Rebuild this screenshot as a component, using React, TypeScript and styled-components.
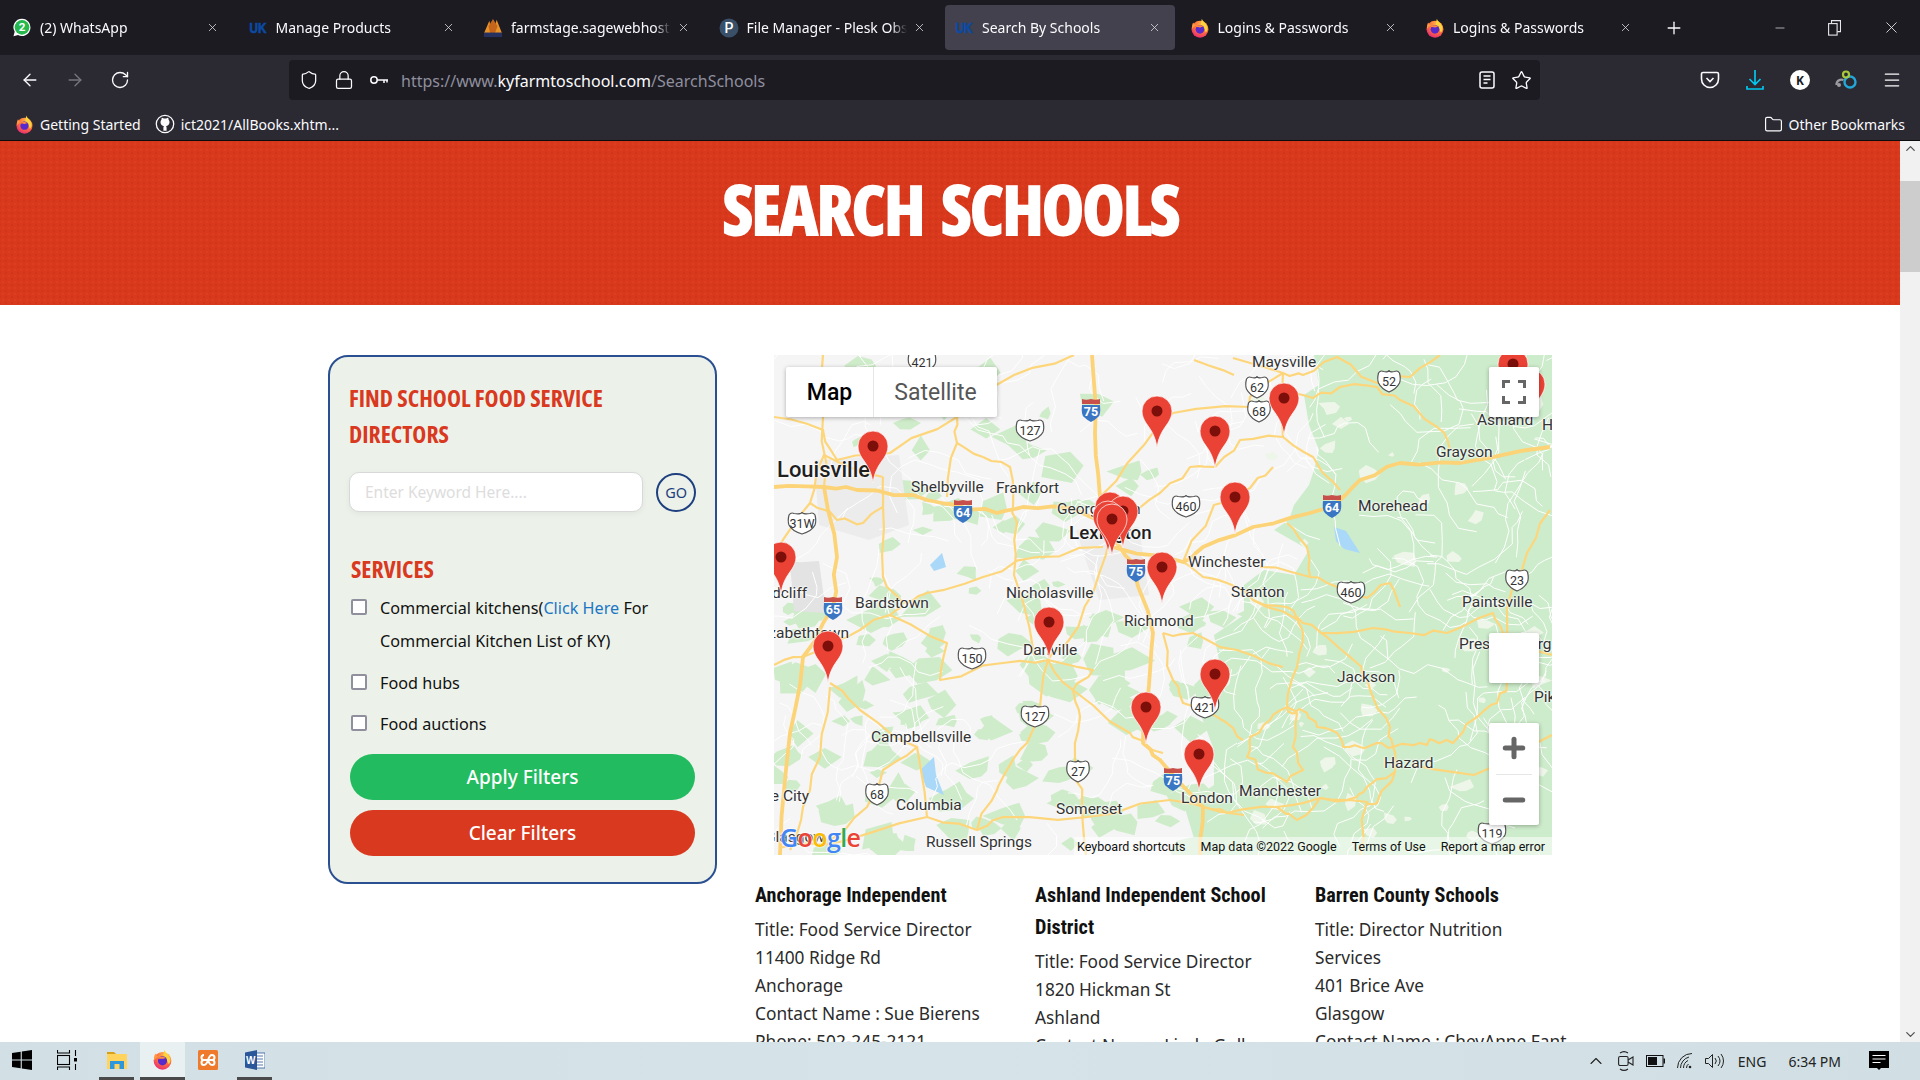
import React from "react";
import styled, { createGlobalStyle } from "styled-components";
import {
  ArrowLeft,
  ArrowRight,
  RotateCw,
  Shield,
  Lock,
  Star,
  Menu,
  X,
  Plus,
  Minus,
  Folder,
  ChevronUp,
  ChevronDown,
} from "lucide-react";

const GlobalStyle = createGlobalStyle`
  html, body {
    margin: 0;
    padding: 0;
    width: 1920px;
    height: 1080px;
    overflow: hidden;
    background: #fff;
    font-family: "Noto Sans", "Open Sans", sans-serif;
  }
`;

const Screen = styled.div`
  width: 1920px;
  height: 1080px;
  display: flex;
  flex-direction: column;
  overflow: hidden;
`;

/* ---------- browser chrome ---------- */

const TabStrip = styled.div`
  height: 55px;
  background: #1c1b22;
  display: flex;
  align-items: center;
  padding-left: 3px;
  gap: 5.5px;
  color: #fbfbfe;
`;

const Tab = styled.div<{ $active?: boolean }>`
  width: 230px;
  height: 45px;
  flex: none;
  display: flex;
  align-items: center;
  padding: 0 14px 0 9px;
  box-sizing: border-box;
  border-radius: 4px;
  background: ${({ $active }) => ($active ? "#42414d" : "transparent")};
`;

const TabIcon = styled.span`
  width: 20px;
  height: 20px;
  flex: none;
  display: flex;
  align-items: center;
  justify-content: center;
`;

const TabTitle = styled.span`
  flex: 1;
  margin-left: 8px;
  font-size: 14px;
  white-space: nowrap;
  overflow: hidden;
  -webkit-mask-image: linear-gradient(to right, #000 90%, transparent);
  mask-image: linear-gradient(to right, #000 90%, transparent);
`;

const TabClose = styled(X)`
  flex: none;
  width: 13px;
  height: 13px;
  margin-left: 6px;
  color: #d8d8dc;
`;

const NewTab = styled(Plus)`
  flex: none;
  margin-left: 12px;
  width: 20px;
  height: 20px;
  stroke-width: 1.6;
`;

const WindowButtons = styled.div`
  margin-left: auto;
  display: flex;
  align-items: center;
  gap: 41px;
  padding-right: 19px;
  color: #e8e8ea;
`;

const NavBar = styled.div`
  height: 55px;
  box-sizing: border-box;
  padding-bottom: 5px;
  background: #2b2a33;
  display: flex;
  align-items: center;
  color: #fbfbfe;
`;

const NavButtons = styled.div`
  width: 289px;
  flex: none;
  display: flex;
  align-items: center;
  gap: 25px;
  padding-left: 20px;
  box-sizing: border-box;
`;

const UrlBar = styled.div`
  width: 1251px;
  height: 40px;
  flex: none;
  background: #1c1b22;
  border-radius: 4px;
  display: flex;
  align-items: center;
  padding: 0 8px 0 10px;
  box-sizing: border-box;
`;

const UrlIcons = styled.div`
  display: flex;
  align-items: center;
  gap: 15px;
  margin-right: 12px;
`;

const UrlText = styled.span`
  padding-top: 2px;
  font-family: "Noto Sans", sans-serif;
  font-size: 16px;
  color: #8f8f9d;
  white-space: nowrap;
`;

const UrlHost = styled.span`
  color: #fbfbfe;
`;

const UrlRight = styled.div`
  margin-left: auto;
  display: flex;
  align-items: center;
  gap: 16px;
`;

const NavRight = styled.div`
  flex: 1;
  display: flex;
  align-items: center;
  gap: 25px;
  padding-left: 160px;
`;

const AccountBadge = styled.span`
  width: 20px;
  height: 20px;
  border-radius: 50%;
  background: #fff;
  color: #1c1b22;
  font-size: 12px;
  font-weight: 700;
  display: flex;
  align-items: center;
  justify-content: center;
`;

const BookmarkBar = styled.div`
  height: 31px;
  box-sizing: border-box;
  padding: 0 15px 2px 15px;
  background: #2b2a33;
  border-bottom: 1px solid #0c0c0d;
  display: flex;
  align-items: center;
  color: #fbfbfe;
  font-size: 14px;
`;

const Bookmark = styled.span`
  display: flex;
  align-items: center;
  gap: 6px;
  white-space: nowrap;
  margin-right: 14px;
`;

const OtherBookmarks = styled(Bookmark)`
  margin-left: auto;
  margin-right: 0;
`;

/* ---------- page ---------- */

const Viewport = styled.div`
  flex: 1;
  min-height: 0;
  display: flex;
  overflow: hidden;
`;

const Page = styled.div`
  flex: 1;
  min-width: 0;
  overflow: hidden;
  background: #fff;
`;

const ScrollTrack = styled.div`
  width: 20px;
  flex: none;
  background: #f1f1f1;
  display: flex;
  flex-direction: column;
  align-items: center;
  color: #505050;
`;

const ScrollThumb = styled.div`
  width: 100%;
  height: 91px;
  margin-top: 25px;
  background: #cdcdcd;
`;

const ScrollSpacer = styled.div`
  flex: 1;
`;

const Hero = styled.header`
  height: 164px;
  background-color: #d8381c;
  background-image: radial-gradient(rgba(255, 100, 50, 0.14) 1px, transparent 1.5px),
    radial-gradient(rgba(120, 20, 0, 0.08) 1px, transparent 1.5px);
  background-size: 6px 6px, 6px 6px;
  background-position: 0 0, 3px 3px;
  display: flex;
  justify-content: center;
  padding-top: 30px;
  box-sizing: border-box;
`;

const HeroTitle = styled.h1`
  margin: 0;
  color: #fff;
  font-family: "Open Sans", sans-serif;
  font-stretch: 75%;
  font-weight: 800;
  font-size: 70px;
  line-height: 76px;
  letter-spacing: -3px;
  word-spacing: 8px;
  text-transform: uppercase;
`;

const Main = styled.main`
  display: flex;
  align-items: flex-start;
  padding: 50px 0 0 328px;
`;

const FilterPanel = styled.aside`
  width: 389px;
  height: 529px;
  flex: none;
  box-sizing: border-box;
  background: #ecf2e9;
  border: 2px solid #2a5091;
  border-radius: 20px;
  padding: 24px 19px 0 19px;
`;

const PanelHeading = styled.h2`
  margin: 0;
  color: #d9391f;
  font-family: "Open Sans", sans-serif;
  font-stretch: 75%;
  font-size: 23.7px;
  font-weight: 700;
  line-height: 35.5px;
`;

const SearchRow = styled.div`
  display: flex;
  align-items: center;
  margin-top: 20px;
  gap: 13px;
`;

const SearchInput = styled.input`
  width: 296px;
  height: 40px;
  box-sizing: border-box;
  padding: 0 15px;
  border: 1px solid #d8d8d8;
  border-radius: 10px;
  background: #fff;
  box-shadow: 0 2px 6px rgba(0, 0, 0, 0.05);
  font-family: "Noto Sans", sans-serif;
  font-size: 15.5px;
  outline: none;
  &::placeholder {
    color: #dddddd;
    opacity: 1;
  }
`;

const GoButton = styled.button`
  width: 40px;
  height: 39px;
  padding: 0;
  border: 2px solid #1e3f80;
  border-radius: 50%;
  background: transparent;
  color: #1e3f80;
  font-family: "Noto Sans", sans-serif;
  font-size: 14.5px;
`;

const ServicesHeading = styled(PanelHeading)`
  margin: 40px 0 0 2px;
`;

const ServiceList = styled.div`
  margin-top: 4px;
  display: flex;
  flex-direction: column;
`;

const ServiceRow = styled.label<{ $gap: number }>`
  display: flex;
  align-items: flex-start;
  margin-bottom: ${({ $gap }) => $gap}px;
  margin-left: 2px;
  font-size: 16.2px;
  line-height: 33px;
  color: #111;
`;

const CheckBox = styled.span`
  width: 16px;
  height: 16px;
  flex: none;
  box-sizing: border-box;
  margin: 7px 13px 0 0;
  border: 2px solid #8f8f9d;
  border-radius: 2px;
  background: #fff;
`;

const ServiceLink = styled.a`
  color: #1b76c4;
`;

const PillButton = styled.button<{ $color: string }>`
  display: block;
  width: 345px;
  height: 46px;
  margin: 0 0 10px 1px;
  border: none;
  border-radius: 23px;
  background: ${({ $color }) => $color};
  color: #fff;
  font-family: "Noto Sans", sans-serif;
  font-size: 19px;
  font-weight: 500;
`;

const Results = styled.section`
  flex: none;
  margin-left: 38px;
`;

const MapFrame = styled.div`
  position: relative;
  width: 778px;
  height: 500px;
  margin-left: 19px;
  overflow: hidden;
  background: #f5f5f5;
  font-family: Roboto, sans-serif;
`;

const MapArt = styled.svg`
  position: absolute;
  inset: 0;
`;

const MapLabel = styled.span<{ $x: number; $y: number; $size?: number }>`
  position: absolute;
  left: ${({ $x }) => $x}px;
  top: ${({ $y }) => $y}px;
  transform: translateY(-50%);
  color: ${({ $size }) => ($size ? "#1f1f1f" : "#333")};
  font-size: ${({ $size }) => $size ?? 15.5}px;
  font-weight: ${({ $size }) => ($size ? 500 : 400)};
  white-space: nowrap;
  text-shadow: 0 0 2px #fff, 0 0 2px #fff, 0 0 3px #fff;
`;

const PinMark = styled.svg<{ $x: number; $y: number }>`
  position: absolute;
  left: ${({ $x }) => $x - 16}px;
  top: ${({ $y }) => $y - 52}px;
`;

const MapTypeControl = styled.div`
  position: absolute;
  left: 12px;
  top: 12px;
  height: 50px;
  display: flex;
  background: #fff;
  border-radius: 2px;
  box-shadow: 0 1px 4px rgba(0, 0, 0, 0.3);
  font-size: 23px;
`;

const MapTypeButton = styled.div<{ $active?: boolean; $width: number }>`
  width: ${({ $width }) => $width}px;
  display: flex;
  align-items: center;
  justify-content: center;
  color: ${({ $active }) => ($active ? "#000" : "#565656")};
  font-weight: ${({ $active }) => ($active ? 500 : 400)};
  & + & {
    border-left: 1px solid #e6e6e6;
  }
`;

const MapSquare = styled.div<{ $top: number }>`
  position: absolute;
  left: 715px;
  top: ${({ $top }) => $top}px;
  width: 50px;
  height: 50px;
  background: #fff;
  border-radius: 2px;
  box-shadow: 0 1px 4px rgba(0, 0, 0, 0.3);
  display: flex;
  align-items: center;
  justify-content: center;
  color: #666;
`;

const ZoomControl = styled.div`
  position: absolute;
  left: 715px;
  top: 368px;
  width: 50px;
  height: 102px;
  background: #fff;
  border-radius: 2px;
  box-shadow: 0 1px 4px rgba(0, 0, 0, 0.3);
  display: flex;
  flex-direction: column;
  align-items: center;
  color: #666;
`;

const ZoomHalf = styled.div`
  flex: 1;
  display: flex;
  align-items: center;
  justify-content: center;
`;

const ZoomRule = styled.div`
  width: 36px;
  height: 1px;
  background: #e6e6e6;
`;

const GoogleMark = styled.div`
  position: absolute;
  left: 6px;
  bottom: 3px;
  font-family: "Open Sans", sans-serif;
  font-size: 25px;
  font-weight: 600;
  letter-spacing: -0.6px;
  line-height: 30px;
  text-shadow: 0 0 2px #fff, 0 0 2px #fff;
`;

const GoogleLetter = styled.span<{ $color: string }>`
  color: ${({ $color }) => $color};
`;

const Attribution = styled.div`
  position: absolute;
  right: 0;
  bottom: 0;
  height: 18px;
  display: flex;
  align-items: center;
  padding: 0 7px 0 3px;
  gap: 15px;
  background: rgba(255, 255, 255, 0.55);
  font-size: 12.5px;
  color: #111;
  white-space: nowrap;
`;

const SchoolGrid = styled.div`
  display: grid;
  grid-template-columns: repeat(3, 280px);
  margin-top: 24px;
`;

const SchoolCard = styled.article`
  padding-right: 23px;
`;

const SchoolName = styled.h3`
  margin: 0 0 5px;
  font-family: Roboto, sans-serif;
  font-stretch: 75%;
  font-size: 20.2px;
  font-weight: 700;
  line-height: 32px;
  color: #111;
`;

const SchoolLine = styled.div`
  font-family: "Noto Sans", sans-serif;
  font-size: 17.3px;
  line-height: 28px;
  color: #2b2b2b;
`;

/* ---------- taskbar ---------- */

const TaskBar = styled.footer`
  height: 38px;
  flex: none;
  background: linear-gradient(90deg, #d2e0e6, #d6e3e8 50%, #d1dfe5);
  display: flex;
  align-items: stretch;
  color: #111;
`;

const TaskSlot = styled.div<{ $width: number; $open?: boolean; $active?: boolean }>`
  width: ${({ $width }) => $width}px;
  flex: none;
  display: flex;
  align-items: center;
  justify-content: center;
  box-sizing: border-box;
  background: ${({ $active }) => ($active ? "#e9f0f2" : "transparent")};
  border-bottom: 3px solid ${({ $open }) => ($open ? "#4a4a4a" : "transparent")};
`;

const Tray = styled.div`
  margin-left: auto;
  display: flex;
  align-items: center;
  padding-right: 31px;
  gap: 12px;
  font-family: "Noto Sans", sans-serif;
  font-size: 14px;
  color: #222;
`;

const TrayClock = styled.span`
  margin: 0 16px 0 10px;
`;

/* ---------- small drawings ---------- */

const Firefox = ({ size = 20 }: { size?: number }) => (
  <svg width={size} height={size} viewBox="0 0 32 32">
    <defs>
      <radialGradient id="ffBody" cx="0.65" cy="0.2" r="0.95">
        <stop offset="0" stopColor="#ffbd4f" />
        <stop offset="0.5" stopColor="#ff7139" />
        <stop offset="1" stopColor="#e31587" />
      </radialGradient>
    </defs>
    <circle cx="16" cy="18" r="13.5" fill="url(#ffBody)" />
    <path d="M19 1c1 5 8 7 9 15 .4 3-1 6-3 7-1-6-5-9-8-11 1-4 1-8 2-11z" fill="#ffd43b" />
    <path d="M5 7c-2 4-2 8-2 11 2-3 4-5 7-6-2-1-4-3-5-5z" fill="#ff9640" />
    <circle cx="16" cy="18" r="7" fill="#592acb" />
    <path d="M9 14c3-3 9-3 12 0-2 0-3 1-5 1s-5 0-7-1z" fill="#ff8a3d" />
  </svg>
);

const WhatsAppIcon = () => (
  <svg width="21" height="21" viewBox="0 0 24 24">
    <path d="M12 1.5a10.3 10.3 0 0 0-8.8 15.6L1.8 22.4l5.4-1.4A10.3 10.3 0 1 0 12 1.5z" fill="#fff" />
    <circle cx="12" cy="11.8" r="8.8" fill="#25b84c" />
    <text x="12" y="16.6" textAnchor="middle" fontSize="14" fontWeight="700" fill="#fff" fontFamily="Roboto">
      2
    </text>
  </svg>
);

const KentuckyIcon = () => (
  <svg width="20" height="20" viewBox="0 0 20 20">
    <text x="10" y="15" textAnchor="middle" fontSize="15" fontWeight="900" fill="#0b4aa2" fontFamily="Liberation Sans" stroke="#0b4aa2" strokeWidth="0.7" textLength="17" lengthAdjust="spacingAndGlyphs">
      UK
    </text>
  </svg>
);

const PeaksIcon = () => (
  <svg width="22" height="22" viewBox="0 0 22 22">
    <path d="M1 17 7 3l3 14zM11 17 15 2l6 15z" fill="#e8922a" />
    <path d="M6 9 11 1l5 8-3 8H8z" fill="#c4651b" />
    <rect x="1" y="16" width="20" height="5" fill="#27315f" />
  </svg>
);

const PleskIcon = () => (
  <svg width="20" height="20" viewBox="0 0 20 20">
    <circle cx="10" cy="10" r="9.5" fill="#3a4f68" />
    <text x="10" y="15" textAnchor="middle" fontSize="14" fill="#fff" fontFamily="Roboto" fontWeight="500">
      P
    </text>
  </svg>
);

const KeyIcon = () => (
  <svg width="20" height="16" viewBox="0 0 20 16" fill="none" stroke="#fbfbfe" strokeWidth="1.5">
    <circle cx="5" cy="8" r="3.2" />
    <path d="M8.2 8H19M15 8v3M18 8v2.5" />
  </svg>
);

const ReaderIcon = () => (
  <svg width="16" height="18" viewBox="0 0 16 18" fill="none" stroke="#fbfbfe" strokeWidth="1.5">
    <rect x="1" y="1" width="14" height="16" rx="2" />
    <path d="M4.5 5h7M4.5 8.5h7M4.5 12h4" />
  </svg>
);

const PocketIcon = () => (
  <svg width="20" height="20" viewBox="0 0 20 20" fill="none" stroke="#fbfbfe" strokeWidth="1.6">
    <path d="M3 2.5h14a1.5 1.5 0 0 1 1.5 1.5v5a8.5 8.5 0 0 1-17 0V4A1.5 1.5 0 0 1 3 2.5z" />
    <path d="M6.5 8 10 11.5 13.5 8" />
  </svg>
);

const DownloadIcon = () => (
  <svg width="20" height="22" viewBox="0 0 20 22" fill="none" stroke="#00c8f0" strokeWidth="1.7">
    <path d="M10 1v14M4.5 10l5.5 5.5 5.5-5.5M2 17v3h16v-3" />
  </svg>
);

const ExtensionIcon = () => (
  <svg width="22" height="20" viewBox="0 0 22 20" fill="none">
    <circle cx="15" cy="12" r="5.5" stroke="#22a7d8" strokeWidth="2.4" />
    <circle cx="11" cy="4.5" r="3" stroke="#a8c83a" strokeWidth="2.2" />
    <path d="M1.5 15a5 5 0 0 1 7-5" stroke="#9a9aa0" strokeWidth="2.2" />
    <circle cx="4" cy="15" r="2" fill="#9a9aa0" />
  </svg>
);

const RestoreIcon = () => (
  <svg width="13" height="16" viewBox="0 0 13 16" fill="none" stroke="#e8e8ea" strokeWidth="1.1">
    <rect x="0.6" y="3.6" width="8.5" height="11.5" />
    <path d="M3.5 3.5V0.6h9v11h-3.2" />
  </svg>
);

const GithubIcon = () => (
  <svg width="20" height="20" viewBox="0 0 20 20">
    <circle cx="10" cy="10" r="8.7" fill="#2b2a33" stroke="#fbfbfe" strokeWidth="1.3" />
    <path d="M5.5 8c0-1 .4-1.800 1-2.500 0-.6 0-1.300.3-1.800.8 0 1.400.3 2 .8a7 7 0 0 1 2.400 0c.6-.5 1.200-.8 2-.8.3.5.3 1.200.3 1.800.6.700 1 1.500 1 2.500 0 3-2 3.800-3.500 4 .4.4.6 1 .6 1.700v3h-3.200v-3c0-.7.2-1.300.6-1.700C7.500 11.800 5.500 11 5.500 8z" fill="#fbfbfe" />
  </svg>
);

const WindowsLogo = () => (
  <svg width="20" height="20" viewBox="0 0 20 20" fill="#000">
    <path d="M0 3 8.700 1.800v7.800H0zM9.800 1.600 20 0v9.600H9.800zM0 10.600h8.700v7.700L0 17zM9.800 10.600H20V20L9.800 18.500z" />
  </svg>
);

const TaskViewIcon = () => (
  <svg width="20" height="20" viewBox="0 0 20 20" fill="none" stroke="#000" strokeWidth="1.1">
    <path d="M0.5 0v3h12V0M0.5 20v-3h12v3" />
    <rect x="0.5" y="5.5" width="12" height="9" />
    <path d="M18.5 0v6M18.5 14v6" />
    <rect x="17" y="8" width="3" height="3.5" fill="#000" stroke="none" />
  </svg>
);

const ExplorerIcon = () => (
  <svg width="20" height="20" viewBox="0 0 20 20">
    <path d="M0 2h7l2 2h-9z" fill="#d8a015" />
    <rect x="0" y="4" width="20" height="15" fill="#ffd35c" />
    <rect x="3" y="11" width="14" height="8" fill="#2e97dc" />
    <rect x="7.5" y="14" width="5" height="5" fill="#ffd35c" />
  </svg>
);

const XamppIcon = () => (
  <svg width="20" height="20" viewBox="0 0 20 20">
    <rect width="20" height="20" rx="1.5" fill="#f07a2c" />
    <path d="M6 5a2.500 2.500 0 0 0 0 5h8a2.500 2.500 0 0 0 0-5c-2 0-3 2-4 5-1 3-2 5-4 5a2.500 2.500 0 0 1 0-5M14 10a2.500 2.500 0 0 1 0 5c-2 0-3-2-4-5" fill="none" stroke="#fff" strokeWidth="2" />
  </svg>
);

const WordIcon = () => (
  <svg width="20" height="20" viewBox="0 0 20 20">
    <rect x="9" y="3" width="11" height="15" fill="#fff" stroke="#2b579a" strokeWidth="0.8" />
    <path d="M11.5 6H18M11.5 9H18M11.5 12H18M11.5 15H18" stroke="#2b579a" strokeWidth="0.8" />
    <path d="M0 2.500 12 0v20L0 17.500z" fill="#2b579a" />
    <text x="5.8" y="13.5" textAnchor="middle" fontSize="10" fontWeight="700" fill="#fff" fontFamily="Liberation Sans">
      W
    </text>
  </svg>
);

const MeetIcon = () => (
  <svg width="16" height="20" viewBox="0 0 16 20" fill="none" stroke="#222" strokeWidth="1.1">
    <path d="M2 2a7 7 0 0 1 8 0M2 18a7 7 0 0 0 8 0" />
    <rect x="0.6" y="5.5" width="9.5" height="9" rx="1.5" />
    <path d="M10 9l5-3v8l-5-3" />
  </svg>
);

const BatteryIcon = () => (
  <svg width="19" height="12" viewBox="0 0 19 12">
    <rect x="0.5" y="0.5" width="16.5" height="11" fill="none" stroke="#111" />
    <rect x="2" y="2" width="9" height="8" fill="#111" />
    <rect x="17.5" y="3.5" width="1.5" height="5" fill="#111" />
  </svg>
);

const WifiIcon = () => (
  <svg width="16" height="16" viewBox="0 0 16 16" fill="none" stroke="#222" strokeWidth="1">
    <path d="M0.5 15A14.500 14.500 0 0 1 15 0.5M3.500 15A11.500 11.500 0 0 1 12 4M6.500 15A8.500 8.500 0 0 1 11 7.500M9.500 15a5 5 0 0 1 2-4" />
    <circle cx="13" cy="14" r="1.3" fill="#222" stroke="none" />
  </svg>
);

const VolumeIcon = () => (
  <svg width="21" height="16" viewBox="0 0 21 16" fill="none" stroke="#222" strokeWidth="1">
    <path d="M0.5 5.500h3l4-4v13l-4-4h-3zM10 5a4.500 4.500 0 0 1 0 6M13 3a8 8 0 0 1 0 10M16 1a11 11 0 0 1 0 14" />
  </svg>
);

const NoticeIcon = () => (
  <svg width="20" height="20" viewBox="0 0 20 20">
    <path d="M0 0h20v17h-8l-2 2-2-2H0z" fill="#000" />
    <path d="M3.5 4.500h13M3.500 8h13M3.500 11.500h8" stroke="#fff" strokeWidth="1" />
  </svg>
);

/* ---------- map data ---------- */

const seeded = (seed: number) => () => {
  seed = (seed + 0x6d2b79f5) | 0;
  let t = Math.imul(seed ^ (seed >>> 15), 1 | seed);
  t = (t + Math.imul(t ^ (t >>> 7), 61 | t)) ^ t;
  return ((t ^ (t >>> 14)) >>> 0) / 4294967296;
};

const blob = (r: () => number, cx: number, cy: number, size: number) => {
  const sides = 4 + Math.floor(r() * 4);
  const pts: string[] = [];
  for (let i = 0; i < sides; i++) {
    const a = (i / sides) * Math.PI * 2;
    const d = size * (0.4 + r() * 0.8);
    pts.push(`${(cx + Math.cos(a) * d).toFixed(1)},${(cy + Math.sin(a) * d * 0.7).toFixed(1)}`);
  }
  return pts.join(" ");
};

const wiggle = (line: string, seed: number, amount: number) => {
  const r = seeded(seed);
  const pts = line.split(" ").map((p) => p.split(",").map(Number));
  const out: string[] = [];
  pts.forEach(([x, y], i) => {
    if (i > 0) {
      const [px, py] = pts[i - 1];
      for (let k = 1; k < 3; k++) {
        const f = k / 3;
        out.push(`${(px + (x - px) * f + (r() - 0.5) * amount).toFixed(1)},${(py + (y - py) * f + (r() - 0.5) * amount).toFixed(1)}`);
      }
    }
    out.push(`${x},${y}`);
  });
  return out.join(" ");
};

const eastLand =
  "540,0 545,30 530,40 535,70 545,95 540,115 535,130 520,150 515,165 500,175 535,195 520,220 490,215 470,230 470,260 440,280 445,305 420,330 425,355 440,395 440,430 410,450 425,500 778,500 778,0";

const buildPatches = () => {
  const r = seeded(42);
  const out: string[] = [];
  for (let i = 0; i < 300; i++) {
    const x = r() * 540;
    const y = 10 + r() * 490;
    const town =
      (x > 30 && x < 135 && y > 95 && y < 180) ||
      (x > 295 && x < 375 && y > 165 && y < 245) ||
      (x > 390 && y < 250) ||
      (y < 130 && r() < 0.4);
    if (town) continue;
    out.push(blob(r, x, y, 8 + r() * 17));
  }
  return out;
};

const buildEastSpots = () => {
  const r = seeded(7);
  const out: string[] = [];
  for (let i = 0; i < 44; i++) {
    out.push(blob(r, 480 + r() * 290, 20 + r() * 470, 4 + r() * 9));
  }
  return out;
};

const buildLanes = () => {
  const r = seeded(11);
  const out: string[] = [];
  for (let i = 0; i < 260; i++) {
    let x = r() < 0.6 ? 430 + r() * 348 : r() * 430;
    let y = r() * 500;
    let a = r() * Math.PI * 2;
    const pts = [`${x.toFixed(1)},${y.toFixed(1)}`];
    const steps = 5 + Math.floor(r() * 6);
    for (let s = 0; s < steps; s++) {
      a += (r() - 0.5) * 1.8;
      const d = 7 + r() * 12;
      x += Math.cos(a) * d;
      y += Math.sin(a) * d;
      pts.push(`${x.toFixed(1)},${y.toFixed(1)}`);
    }
    out.push(pts.join(" "));
  }
  return out;
};

const greenPatches = buildPatches();
const eastSpots = buildEastSpots();
const lanes = buildLanes();

const highways = [
  "0,132 50,132 83,135 139,140 183,150 223,158 249,152 296,153 323,165 339,192 409,207 429,192 479,172 536,158 566,145 586,125 626,108 686,108 776,92",
  "318,0 321,78 326,142 336,182 359,208 379,278 375,330 369,388 386,405 429,452 426,500",
  "50,132 63,202 59,252 29,302 16,378 6,500",
];

const roads = [
  "0,310 29,302 73,282 116,260 173,288 166,325 229,308 274,305",
  "56,328 86,355 143,392 109,415 93,452 56,485",
  "56,332 46,402 29,452 16,495",
  "143,392 153,462",
  "6,493 70,486 153,462 203,475 229,462 313,462 396,445 470,460",
  "274,305 266,352 253,388 233,415 223,435 203,475",
  "274,305 299,335 356,378 371,388 389,398",
  "299,335 306,362 301,405 308,452 312,500",
  "274,305 319,315 299,335",
  "329,192 263,202 209,222 153,238 129,248 116,260",
  "183,62 183,88 173,142",
  "109,122 109,152 89,168 63,165 36,148 50,100 109,122",
  "49,0 49,62 50,132",
  "63,105 116,98 183,62 240,20 300,0",
  "0,62 49,75 63,105",
  "209,102 236,112 239,152 243,168 240,220 260,300",
  "183,88 209,102",
  "336,182 319,238 295,285 274,305",
  "459,3 509,18 529,20 563,2 603,28 636,22 666,0",
  "509,18 476,42 476,52 399,58 370,90 326,142",
  "509,38 539,43 566,32 603,32 626,45 663,72 676,95",
  "509,18 509,82 466,85 441,112 416,112 386,138 350,160",
  "509,82 539,102 549,118 566,135",
  "499,112 476,133 440,150 409,207",
  "486,212 536,222 553,228 593,243 616,228 626,252",
  "536,222 533,192 513,168",
  "409,207 429,222 453,228 479,245 519,262 529,278 523,312 513,352 496,365 476,382 473,402 493,418 513,427 529,415 519,392 523,358 513,352",
  "513,352 533,358 543,372 563,378 569,392 586,392 603,388 619,392 646,388 659,385 679,388 703,362 723,348 733,328 733,252 753,198 776,155",
  "621,417 619,392 616,372 599,342 589,322 583,308 553,282 529,268 513,252 479,245",
  "546,278 599,273 636,278 673,278 719,258 729,278 778,300",
  "621,417 593,432 583,442 546,443 503,452 453,458 429,452",
  "546,443 593,447 603,448 621,417",
  "593,447 586,500",
  "503,452 523,465 546,443",
  "389,278 419,278 463,295 509,312",
  "389,278 399,325 409,348 453,368 469,385",
  "0,200 36,148",
  "129,248 109,222 109,152",
  "460,20 420,5",
  "778,380 700,420 640,410",
];

const usShields: [number, number, string][] = [
  [148, 7, "421"], [256, 75, "127"], [28, 168, "31W"], [412, 151, "460"], [483, 32, "62"], [485, 56, "68"],
  [615, 26, "52"], [577, 237, "460"], [743, 225, "23"], [198, 303, "150"], [261, 361, "127"], [304, 416, "27"],
  [103, 439, "68"], [431, 352, "421"], [718, 478, "119"],
];

const interstates: [number, number, string][] = [
  [317, 55, "75"], [189, 156, "64"], [362, 215, "75"], [59, 253, "65"], [558, 151, "64"], [399, 424, "75"],
];

const UsShield = ({ x, y, text }: { x: number; y: number; text: string }) => {
  const w = text.length > 2 ? 13 : 10.5;
  return (
    <g transform={`translate(${x} ${y})`}>
      <path
        d={`M${-w} -8 q2 -3 5 -1.5 q${w - 5} 1 ${w - 5} -1.5 q0 2.5 ${w - 5} 1.5 q3 -1.5 5 1.5 q1.5 6 0 10 q-3 6 -${w} 9 q-${w - 3} -3 -${w} -9 q-1.5 -4 0 -10z`}
        fill="#fff"
        stroke="#555"
        strokeWidth="1.2"
      />
      <text y="4.5" textAnchor="middle" fontSize="12.5" fill="#333" fontFamily="Roboto">
        {text}
      </text>
    </g>
  );
};

const InterstateShield = ({ x, y, text }: { x: number; y: number; text: string }) => (
  <g transform={`translate(${x} ${y})`}>
    <path d="M-9 -6q0-4 0-5q4 1.5 9 0q5 1.5 9 0q0 1 0 5z" fill="#c8504a" />
    <path d="M-9 -5h18q1 10-2 12q-3 3-7 5q-4-2-7-5q-3-2-2-12z" fill="#3a76c4" />
    <text y="6" textAnchor="middle" fontSize="12.5" fontWeight="700" fill="#fff" fontFamily="Roboto">
      {text}
    </text>
  </g>
);

const mapLabels: { x: number; y: number; t: string; size?: number }[] = [
  { x: 3, y: 114, t: "Louisville", size: 22 },
  { x: 137, y: 132, t: "Shelbyville" },
  { x: 222, y: 133, t: "Frankfort" },
  { x: 283, y: 154, t: "Georgetown" },
  { x: 295, y: 178, t: "Lexington", size: 18.8 },
  { x: 232, y: 238, t: "Nicholasville" },
  { x: 81, y: 248, t: "Bardstown" },
  { x: -20, y: 238, t: "Radcliff" },
  { x: -22, y: 278, t: "Elizabethtown" },
  { x: 350, y: 266, t: "Richmond" },
  { x: 249, y: 295, t: "Danville" },
  { x: 97, y: 382, t: "Campbellsville" },
  { x: -29, y: 441, t: "Cave City" },
  { x: 122, y: 450, t: "Columbia" },
  { x: 152, y: 487, t: "Russell Springs" },
  { x: 282, y: 454, t: "Somerset" },
  { x: 407, y: 443, t: "London" },
  { x: 465, y: 436, t: "Manchester" },
  { x: 610, y: 408, t: "Hazard" },
  { x: 563, y: 322, t: "Jackson" },
  { x: 685, y: 289, t: "Prestonsburg" },
  { x: 760, y: 342, t: "Pikeville" },
  { x: 688, y: 247, t: "Paintsville" },
  { x: 457, y: 237, t: "Stanton" },
  { x: 414, y: 207, t: "Winchester" },
  { x: 584, y: 151, t: "Morehead" },
  { x: 662, y: 97, t: "Grayson" },
  { x: 478, y: 7, t: "Maysville" },
  { x: 703, y: 65, t: "Ashland" },
  { x: 768, y: 70, t: "Huntington" },
  { x: -9, y: 482, t: "Glasgow" },
];

const pins: [number, number][] = [
  [99, 127], [383, 92], [510, 79], [441, 112], [461, 178], [388, 248], [739, 45], [756, 65],
  [7, 238], [54, 327], [275, 303], [372, 388], [441, 355], [425, 435],
  [336, 188], [349, 192], [334, 197], [338, 200],
];

const Pin = ({ x, y }: { x: number; y: number }) => (
  <PinMark $x={x} $y={y} width="32" height="54" viewBox="0 0 32 54">
    <path
      d="M16 53c-1.5-12-6-18-11-25C2.5 24 1 20.5 1 16a15 15 0 0 1 30 0c0 4.5-1.5 8-4 12-5 7-9.5 13-11 25z"
      fill="#ea4335"
      stroke="#fff"
      strokeOpacity="0.7"
      strokeWidth="1"
    />
    <circle cx="16" cy="16" r="5.5" fill="#7d0f0a" />
  </PinMark>
);

const schools = [
  {
    name: "Anchorage Independent",
    lines: ["Title: Food Service Director", "11400 Ridge Rd", "Anchorage", "Contact Name : Sue Bierens", "Phone: 502-245-2121"],
  },
  {
    name: "Ashland Independent School District",
    lines: ["Title: Food Service Director", "1820 Hickman St", "Ashland", "Contact Name : Linda Gull"],
  },
  {
    name: "Barren County Schools",
    lines: ["Title: Director Nutrition Services", "401 Brice Ave", "Glasgow", "Contact Name : ChevAnne Fant"],
  },
];

const tabs = [
  { icon: <WhatsAppIcon />, title: "(2) WhatsApp" },
  { icon: <KentuckyIcon />, title: "Manage Products" },
  { icon: <PeaksIcon />, title: "farmstage.sagewebhosting.com" },
  { icon: <PleskIcon />, title: "File Manager - Plesk Obsidian" },
  { icon: <KentuckyIcon />, title: "Search By Schools", active: true },
  { icon: <Firefox />, title: "Logins & Passwords" },
  { icon: <Firefox />, title: "Logins & Passwords" },
];

const MapPanel = () => (
  <MapFrame>
    <MapArt width="778" height="500" viewBox="0 0 778 500">
      <rect width="778" height="500" fill="#f5f5f5" />
      <polygon points={eastLand} fill="#cdeccb" />
      {greenPatches.map((p, i) => (
        <polygon key={i} points={p} fill="#cfecca" />
      ))}
      {eastSpots.map((p, i) => (
        <polygon key={i} points={p} fill="#eef6ea" />
      ))}
      <polygon points="40,105 125,100 135,170 95,185 45,170" fill="#ececec" />
      <polygon points="16,208 45,206 52,258 20,256" fill="#e3e3e3" />
      <polygon points="302,175 365,172 375,240 325,245" fill="#ececec" />
      <polygon points="560,172 572,176 586,198 570,194 562,186" fill="#a9d8f8" />
      <polygon points="146,415 160,402 162,420 170,440 152,432" fill="#a9d8f8" />
      <polygon points="156,210 168,198 172,212 160,216" fill="#a9d8f8" />
      {lanes.map((p, i) => (
        <polyline key={i} points={p} fill="none" stroke="#fff" strokeWidth="1" />
      ))}
      {roads.map((p, i) => (
        <polyline key={i} points={wiggle(p, i + 3, 6)} fill="none" stroke="#fdd67c" strokeWidth="2.2" strokeLinejoin="round" />
      ))}
      {highways.map((p, i) => (
        <polyline key={i} points={wiggle(p, i + 90, 4)} fill="none" stroke="#fcd377" strokeWidth="3.8" strokeLinejoin="round" />
      ))}
      {usShields.map(([x, y, t], i) => (
        <UsShield key={i} x={x} y={y} text={t} />
      ))}
      {interstates.map(([x, y, t], i) => (
        <InterstateShield key={i} x={x} y={y} text={t} />
      ))}
    </MapArt>
    {mapLabels.map((l) => (
      <MapLabel key={l.t} $x={l.x} $y={l.y} $size={l.size}>
        {l.t}
      </MapLabel>
    ))}
    {pins.map(([x, y], i) => (
      <Pin key={i} x={x} y={y} />
    ))}
    <MapTypeControl>
      <MapTypeButton $active $width={87}>
        Map
      </MapTypeButton>
      <MapTypeButton $width={123}>Satellite</MapTypeButton>
    </MapTypeControl>
    <MapSquare $top={12}>
      <svg width="24" height="24" viewBox="0 0 24 24" fill="none" stroke="#666" strokeWidth="3">
        <path d="M1.5 8V1.5H8M16 1.5h6.5V8M22.5 16v6.5H16M8 22.5H1.5V16" />
      </svg>
    </MapSquare>
    <MapSquare $top={278} />
    <ZoomControl>
      <ZoomHalf>
        <Plus size={30} strokeWidth={4} />
      </ZoomHalf>
      <ZoomRule />
      <ZoomHalf>
        <Minus size={30} strokeWidth={4} />
      </ZoomHalf>
    </ZoomControl>
    <GoogleMark>
      <GoogleLetter $color="#4285f4">G</GoogleLetter>
      <GoogleLetter $color="#ea4335">o</GoogleLetter>
      <GoogleLetter $color="#fbbc05">o</GoogleLetter>
      <GoogleLetter $color="#4285f4">g</GoogleLetter>
      <GoogleLetter $color="#34a853">l</GoogleLetter>
      <GoogleLetter $color="#ea4335">e</GoogleLetter>
    </GoogleMark>
    <Attribution>
      <span>Keyboard shortcuts</span>
      <span>Map data ©2022 Google</span>
      <span>Terms of Use</span>
      <span>Report a map error</span>
    </Attribution>
  </MapFrame>
);

export default function App() {
  return (
    <Screen>
      <GlobalStyle />
      <TabStrip>
        {tabs.map((t, i) => (
          <Tab key={i} $active={t.active}>
            <TabIcon>{t.icon}</TabIcon>
            <TabTitle>{t.title}</TabTitle>
            <TabClose strokeWidth={1.5} />
          </Tab>
        ))}
        <NewTab />
        <WindowButtons>
          <Minus size={14} strokeWidth={1.2} />
          <RestoreIcon />
          <X size={19} strokeWidth={1.1} />
        </WindowButtons>
      </TabStrip>
      <NavBar>
        <NavButtons>
          <ArrowLeft size={20} strokeWidth={1.6} />
          <ArrowRight size={20} strokeWidth={1.6} color="#77767e" />
          <RotateCw size={20} strokeWidth={1.6} />
        </NavButtons>
        <UrlBar>
          <UrlIcons>
            <Shield size={20} strokeWidth={1.5} />
            <Lock size={20} strokeWidth={1.5} />
            <KeyIcon />
          </UrlIcons>
          <UrlText>
            https://www.<UrlHost>kyfarmtoschool.com</UrlHost>/SearchSchools
          </UrlText>
          <UrlRight>
            <ReaderIcon />
            <Star size={21} strokeWidth={1.5} />
          </UrlRight>
        </UrlBar>
        <NavRight>
          <PocketIcon />
          <DownloadIcon />
          <AccountBadge>K</AccountBadge>
          <ExtensionIcon />
          <Menu size={20} strokeWidth={1.5} />
        </NavRight>
      </NavBar>
      <BookmarkBar>
        <Bookmark>
          <Firefox size={19} />
          Getting Started
        </Bookmark>
        <Bookmark>
          <GithubIcon />
          ict2021/AllBooks.xhtm...
        </Bookmark>
        <OtherBookmarks>
          <Folder size={19} strokeWidth={1.5} />
          Other Bookmarks
        </OtherBookmarks>
      </BookmarkBar>
      <Viewport>
        <Page>
          <Hero>
            <HeroTitle>Search Schools</HeroTitle>
          </Hero>
          <Main>
            <FilterPanel>
              <PanelHeading>FIND SCHOOL FOOD SERVICE DIRECTORS</PanelHeading>
              <SearchRow>
                <SearchInput placeholder="Enter Keyword Here...." />
                <GoButton>GO</GoButton>
              </SearchRow>
              <ServicesHeading>SERVICES</ServicesHeading>
              <ServiceList>
                <ServiceRow $gap={9}>
                  <CheckBox />
                  <span>
                    Commercial kitchens(<ServiceLink>Click Here</ServiceLink> For Commercial Kitchen List of KY)
                  </span>
                </ServiceRow>
                <ServiceRow $gap={8}>
                  <CheckBox />
                  <span>Food hubs</span>
                </ServiceRow>
                <ServiceRow $gap={13}>
                  <CheckBox />
                  <span>Food auctions</span>
                </ServiceRow>
              </ServiceList>
              <PillButton $color="#22bb5f">Apply Filters</PillButton>
              <PillButton $color="#d9391f">Clear Filters</PillButton>
            </FilterPanel>
            <Results>
              <MapPanel />
              <SchoolGrid>
                {schools.map((s) => (
                  <SchoolCard key={s.name}>
                    <SchoolName>{s.name}</SchoolName>
                    {s.lines.map((l) => (
                      <SchoolLine key={l}>{l}</SchoolLine>
                    ))}
                  </SchoolCard>
                ))}
              </SchoolGrid>
            </Results>
          </Main>
        </Page>
        <ScrollTrack>
          <ChevronUp size={15} />
          <ScrollThumb />
          <ScrollSpacer />
          <ChevronDown size={15} />
        </ScrollTrack>
      </Viewport>
      <TaskBar>
        <TaskSlot $width={44}>
          <WindowsLogo />
        </TaskSlot>
        <TaskSlot $width={45}>
          <TaskViewIcon />
        </TaskSlot>
        <TaskSlot $width={10} />
        <TaskSlot $width={35} $open>
          <ExplorerIcon />
        </TaskSlot>
        <TaskSlot $width={6} />
        <TaskSlot $width={45} $open $active>
          <Firefox size={21} />
        </TaskSlot>
        <TaskSlot $width={6} />
        <TaskSlot $width={34}>
          <XamppIcon />
        </TaskSlot>
        <TaskSlot $width={12} />
        <TaskSlot $width={35} $open>
          <WordIcon />
        </TaskSlot>
        <Tray>
          <ChevronUp size={20} strokeWidth={1.3} />
          <MeetIcon />
          <BatteryIcon />
          <WifiIcon />
          <VolumeIcon />
          <span>ENG</span>
          <TrayClock>6:34 PM</TrayClock>
          <NoticeIcon />
        </Tray>
      </TaskBar>
    </Screen>
  );
}
